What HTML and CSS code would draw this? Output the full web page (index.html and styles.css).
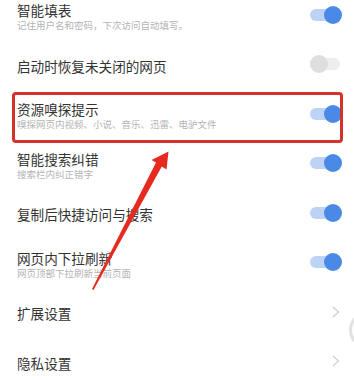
FILE: index.html
```html
<!DOCTYPE html>
<html lang="zh-CN">
<head>
<meta charset="utf-8">
<link rel="stylesheet" href="styles.css">
</head>
<body>
<div class="page">
  <div class="list">
    <div class="row">
      <div class="text"><div class="title">智能填表</div><div class="sub">记住用户名和密码，下次访问自动填写。</div></div>
      <div class="toggle on"><span class="knob"></span></div>
    </div>
    <div class="row">
      <div class="text"><div class="title">启动时恢复未关闭的网页</div></div>
      <div class="toggle"><span class="knob"></span></div>
    </div>
    <div class="row">
      <div class="text"><div class="title">资源嗅探提示</div><div class="sub">嗅探网页内视频、小说、音乐、迅雷、电驴文件</div></div>
      <div class="toggle on"><span class="knob"></span></div>
    </div>
    <div class="row">
      <div class="text"><div class="title">智能搜索纠错</div><div class="sub">搜索栏内纠正错字</div></div>
      <div class="toggle on"><span class="knob"></span></div>
    </div>
    <div class="row">
      <div class="text"><div class="title">复制后快捷访问与搜索</div></div>
      <div class="toggle on"><span class="knob"></span></div>
    </div>
    <div class="row">
      <div class="text"><div class="title">网页内下拉刷新</div><div class="sub">网页顶部下拉刷新当前页面</div></div>
      <div class="toggle on"><span class="knob"></span></div>
    </div>
    <div class="row">
      <div class="text"><div class="title">扩展设置</div></div>
      <svg class="chev" width="8" height="12" viewBox="0 0 8 12"><polyline points="1,1 6.5,6 1,11" fill="none" stroke="#cfcfcf" stroke-width="1.2"/></svg>
    </div>
    <div class="row">
      <div class="text"><div class="title">隐私设置</div></div>
      <svg class="chev" width="8" height="12" viewBox="0 0 8 12"><polyline points="1,1 6.5,6 1,11" fill="none" stroke="#cfcfcf" stroke-width="1.2"/></svg>
    </div>
  </div>
  <div class="highlight"></div>
  <div class="float-btn"></div>
  <svg class="arrow" width="354" height="380" viewBox="0 0 354 380">
    <polygon points="168.5,151.5 166.5,169.5 161.8,166.5 93.5,290 92,289 156,162.5 151.5,160" fill="#e62a20"/>
  </svg>
</div>
</body>
</html>
```
FILE: styles.css
```css
html, body {
  margin: 0;
  padding: 0;
  background: #ffffff;
}
body {
  width: 354px;
  height: 380px;
  overflow: hidden;
  font-family: "Noto Sans CJK SC", "Noto Sans", sans-serif;
}
.page {
  position: relative;
  width: 354px;
  height: 380px;
  overflow: hidden;
}
.list {
  margin-top: -10px;
}
.row {
  height: 49.5px;
  display: flex;
  align-items: center;
  justify-content: space-between;
  padding: 0 12px 0 17px;
}
.text {
  padding-top: 3px;
}
.title {
  font-size: 13.6px;
  line-height: 18px;
  color: #333333;
}
.sub {
  font-size: 9.5px;
  line-height: 12px;
  color: #b4b4b4;
}
.toggle {
  position: relative;
  width: 32px;
  height: 18px;
}
.toggle::before {
  content: "";
  position: absolute;
  left: 0;
  right: 2px;
  top: 3px;
  height: 12px;
  border-radius: 6px;
  background: #eeeeee;
}
.toggle .knob {
  position: absolute;
  top: 0;
  left: 0;
  width: 18px;
  height: 18px;
  border-radius: 50%;
  background: #dedede;
}
.toggle.on::before {
  background: #bdd3f6;
}
.toggle.on .knob {
  left: auto;
  right: 0;
  background: #4a89e6;
}
.chev {
  margin-right: 2px;
}
.highlight {
  position: absolute;
  left: 12px;
  top: 92px;
  width: 325px;
  height: 45px;
  border: 3px solid #d4332b;
  border-radius: 4px;
}
.float-btn {
  position: absolute;
  left: 349px;
  top: 311px;
  width: 32px;
  height: 32px;
  border: 3px solid #e2e2e2;
  border-radius: 50%;
}
.arrow {
  position: absolute;
  left: 0;
  top: 0;
}
```
